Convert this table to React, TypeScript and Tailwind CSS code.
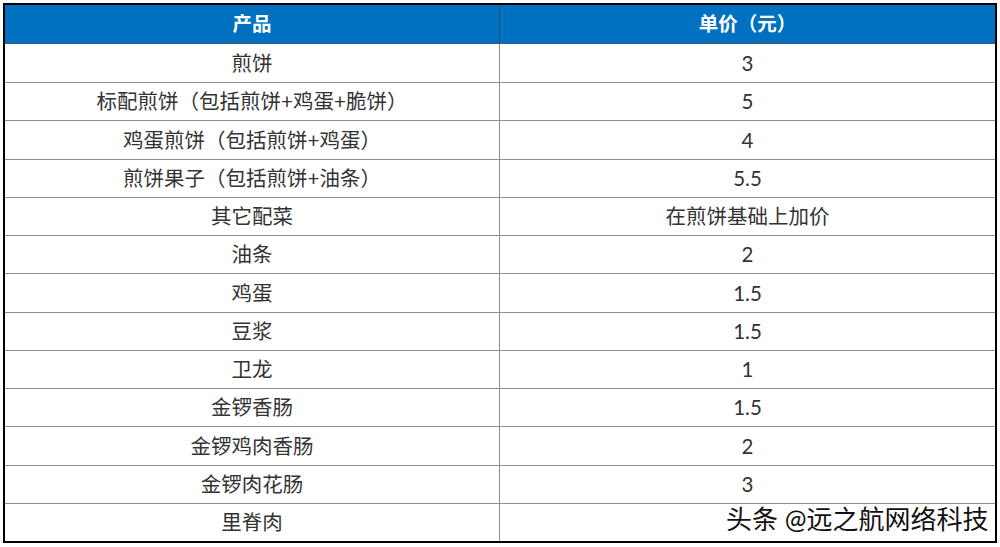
import React from 'react';

const rows: [string, string][] = [
  ['煎饼', '3'],
  ['标配煎饼（包括煎饼+鸡蛋+脆饼）', '5'],
  ['鸡蛋煎饼（包括煎饼+鸡蛋）', '4'],
  ['煎饼果子（包括煎饼+油条）', '5.5'],
  ['其它配菜', '在煎饼基础上加价'],
  ['油条', '2'],
  ['鸡蛋', '1.5'],
  ['豆浆', '1.5'],
  ['卫龙', '1'],
  ['金锣香肠', '1.5'],
  ['金锣鸡肉香肠', '2'],
  ['金锣肉花肠', '3'],
  ['里脊肉', ''],
];

export default function App() {
  return (
    <div
      className="w-[1000px] h-[547px] bg-white pt-[3px] pl-[3px] relative"
      style={{ fontFamily: '"Lato", "Noto Sans CJK SC", sans-serif' }}
    >
      <div className="w-[994px] h-[540px] border-2 border-black grid grid-cols-[495px_1fr] grid-rows-[39px_repeat(13,1fr)] text-[20.5px] text-[#333333]">
        <div className="bg-[#0070c0] text-white text-[19.5px] font-bold flex items-center justify-center border-r border-[#1f4f7a] border-b border-b-[#3a5a78]">
          产品
        </div>
        <div className="bg-[#0070c0] text-white text-[19.5px] font-bold flex items-center justify-center border-b border-b-[#3a5a78]">
          单价（元）
        </div>
        {rows.map(([name, price], i) => (
          <React.Fragment key={i}>
            <div
              className={`flex items-center justify-center border-r border-[#8f8f8f] ${
                i > 0 ? 'border-t border-t-[#8f8f8f]' : ''
              }`}
            >
              {name}
            </div>
            <div
              className={`flex items-center justify-center ${
                i > 0 ? 'border-t border-t-[#8f8f8f]' : ''
              }`}
            >
              {price}
            </div>
          </React.Fragment>
        ))}
      </div>
      <div
        className="absolute left-[726px] top-[503px] text-[26px] leading-[32px] text-[#111111] whitespace-nowrap"
        style={{ textShadow: '0 0 2px #fff, 0 0 2px #fff' }}
      >
        头条 @远之航网络科技
      </div>
    </div>
  );
}
